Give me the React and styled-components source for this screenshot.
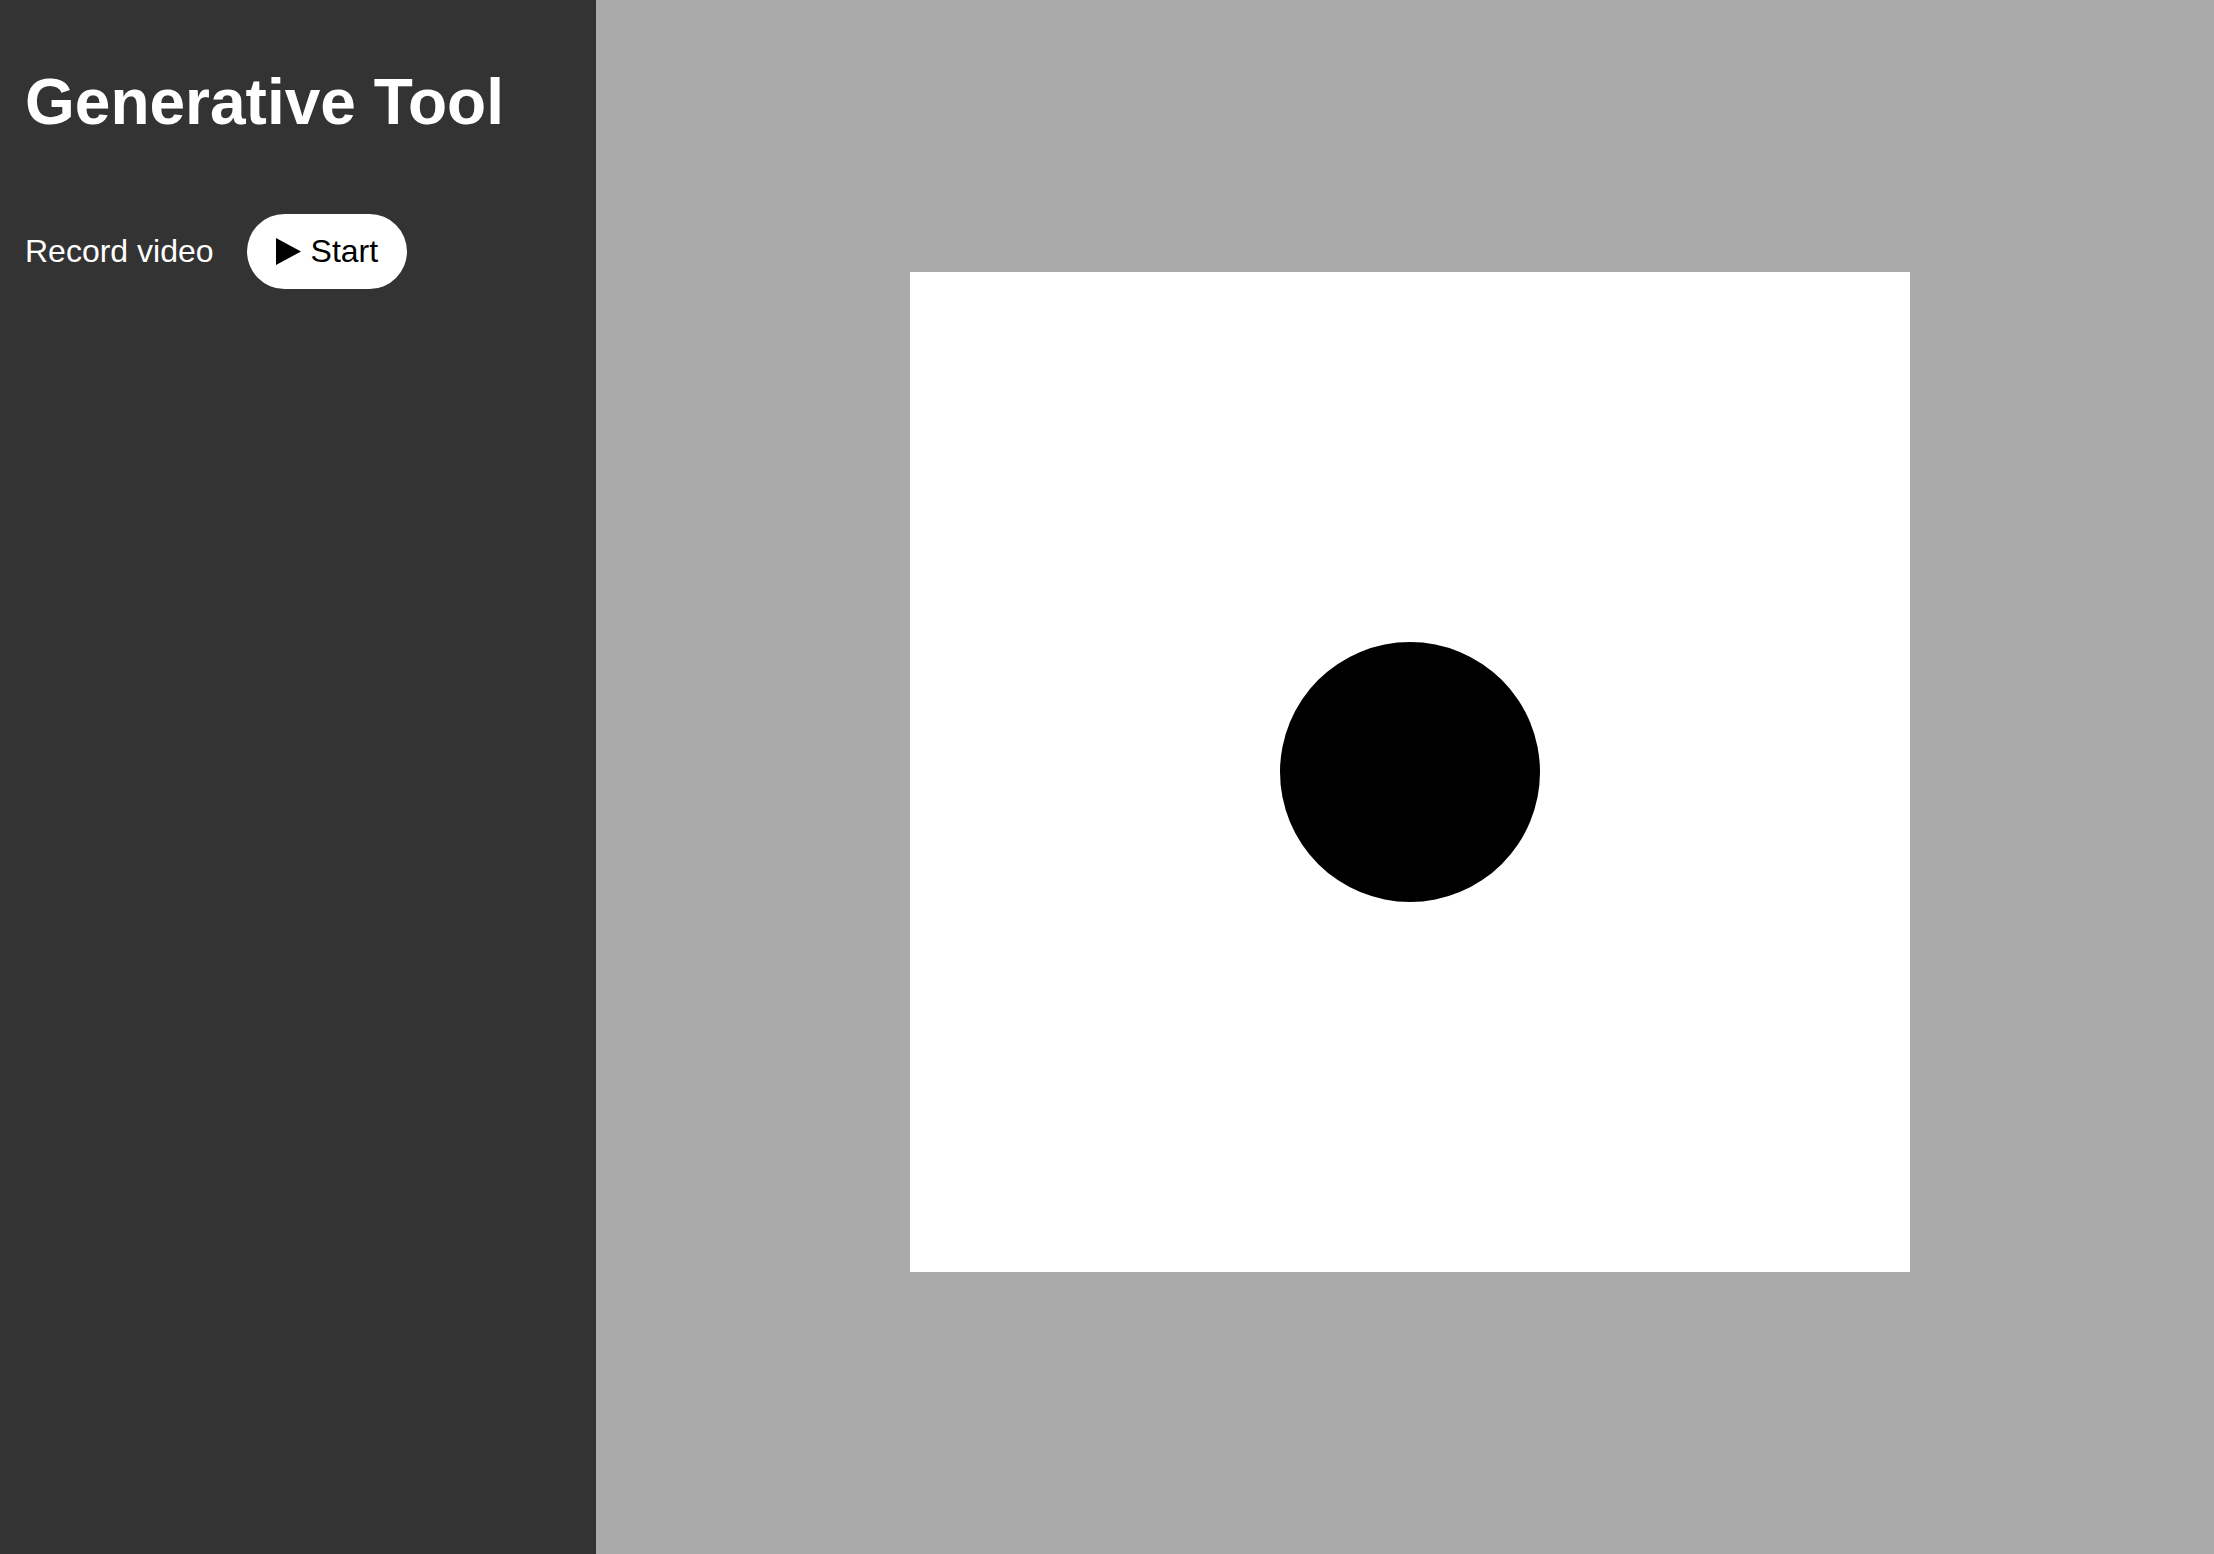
import React, { useState } from 'react';
import styled, { createGlobalStyle } from 'styled-components';

const GlobalStyle = createGlobalStyle`
  html, body {
    margin: 0;
    padding: 0;
    height: 100%;
    overflow: hidden;
  }
  body {
    font-family: "Liberation Sans", Arial, Helvetica, sans-serif;
  }
  #root {
    height: 100%;
  }
`;

const Layout = styled.div`
  display: flex;
  width: 100vw;
  height: 100vh;
`;

const Sidebar = styled.aside`
  width: 596px;
  flex-shrink: 0;
  box-sizing: border-box;
  padding: 65px 25px;
  background-color: #333333;
  color: #ffffff;
`;

const Title = styled.h1`
  margin: 0 0 75px;
  font-size: 64px;
  font-weight: 700;
  line-height: 74px;
`;

const ControlRow = styled.div`
  display: flex;
  align-items: center;
  gap: 33px;
`;

const Label = styled.span`
  font-size: 32px;
`;

const PillButton = styled.button`
  display: flex;
  align-items: center;
  gap: 10px;
  height: 75px;
  padding: 0 29px;
  border: none;
  border-radius: 38px;
  background: #ffffff;
  color: #000000;
  font-family: inherit;
  font-size: 32px;
  cursor: pointer;
`;

const Stage = styled.main`
  flex: 1;
  display: flex;
  align-items: center;
  justify-content: center;
  padding: 0 0 10px 10px;
  background-color: #aaaaaa;
`;

const Canvas = styled.div`
  width: 1000px;
  height: 1000px;
  flex-shrink: 0;
  background: #ffffff;
`;

function PlayIcon() {
  return (
    <svg width="25" height="27" viewBox="0 0 25 27">
      <polygon points="0,0 25,13.5 0,27" fill="#000" />
    </svg>
  );
}

export default function App() {
  const [recording, setRecording] = useState(false);

  return (
    <Layout>
      <GlobalStyle />
      <Sidebar>
        <Title>Generative Tool</Title>
        <ControlRow>
          <Label>Record video</Label>
          <PillButton onClick={() => setRecording(!recording)}>
            <PlayIcon />
            {recording ? 'Stop' : 'Start'}
          </PillButton>
        </ControlRow>
      </Sidebar>
      <Stage>
        <Canvas>
          <svg width="1000" height="1000" viewBox="0 0 1000 1000">
            <circle cx="500" cy="500" r="130" fill="#000" />
          </svg>
        </Canvas>
      </Stage>
    </Layout>
  );
}
